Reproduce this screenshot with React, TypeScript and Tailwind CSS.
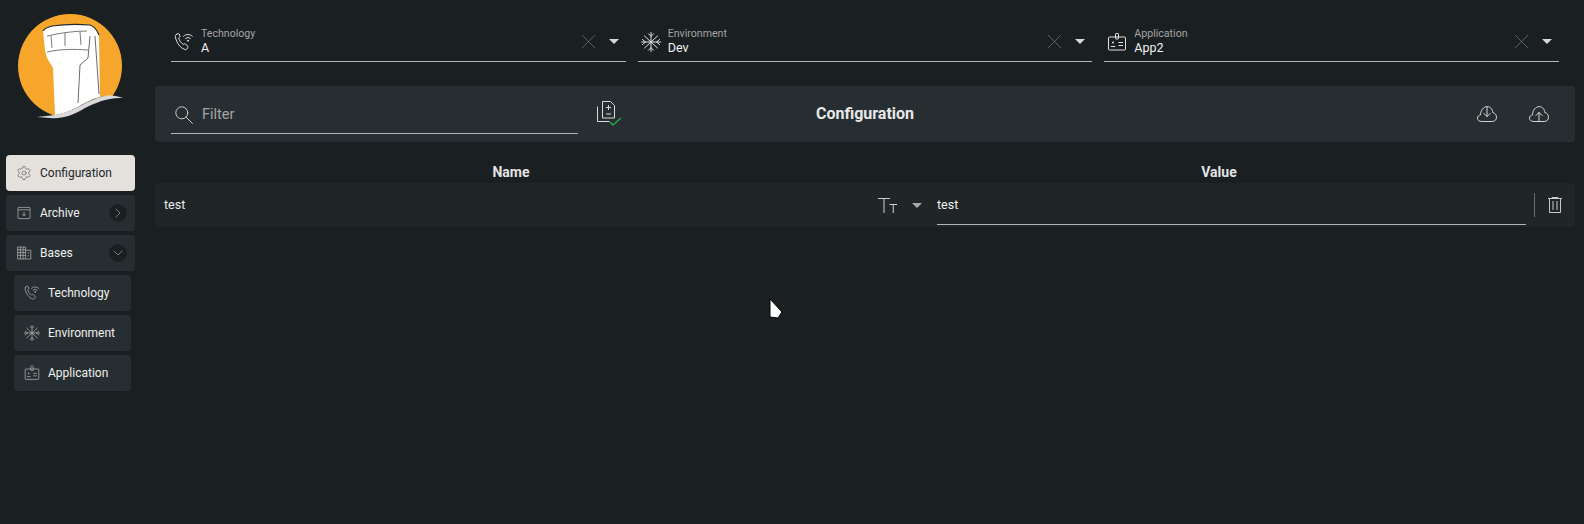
import { ChevronDown, ChevronRight, Settings, X } from "lucide-react";
import type { ReactNode } from "react";

const font = { fontFamily: "Roboto, sans-serif" };

function PhoneWifi({ className }: { className?: string }) {
  return (
    <svg viewBox="0 0 20 20" fill="none" stroke="currentColor" strokeWidth="1" strokeLinecap="round" strokeLinejoin="round" className={className}>
      <path d="M2.200 2.600 4 1.600c.5-.2.9 0 1.100.4l.9 2c.2.4 0 .8-.3 1.100l-1 .8c.6 2.600 2.200 5 4.600 6.500l1.200-.6c.4-.2.8-.1 1.100.2l1.900 2c.4.4.6 1 .3 1.500l-.8 1.400c-.5.8-1.300.9-2.100.6C6.100 15.800 2.600 11.200 1.300 4.600c-.1-.8.3-1.600.9-2Z" />
      <path d="M9.500 4.200c2.800-2.300 6-2.300 8.800 0M11.500 6.500c1.600-1.300 3.200-1.300 4.800 0" />
      <circle cx="13.900" cy="8.700" r=".5" fill="currentColor" />
    </svg>
  );
}

function Flake({ className }: { className?: string }) {
  return (
    <svg viewBox="0 0 20 20" fill="none" stroke="currentColor" strokeWidth="1" strokeLinecap="round" className={className}>
      <path d="M.5 10h19M10 .5v19M3.500 4l13 12M16.500 4l-13 12" />
      <path d="M7.500 1.800 10 4.300l2.500-2.500M7.500 18.200 10 15.700l2.500 2.500M1.500 7.500 4.500 10l-3 2.500M18.500 7.500 15.500 10l3 2.500" />
    </svg>
  );
}

function IdBadge({ className }: { className?: string }) {
  return (
    <svg viewBox="0 0 20 20" fill="none" stroke="currentColor" strokeWidth="1" strokeLinejoin="round" className={className}>
      <rect x="1.500" y="5" width="17" height="13" rx="1" />
      <rect x="8.500" y="1.500" width="3" height="5.500" rx=".6" />
      <circle cx="6" cy="10.500" r="1" fill="currentColor" stroke="none" />
      <path d="M3.800 14.500h4.400M11.500 10.500h4.500M11.500 13.500h4.500" />
    </svg>
  );
}

function Archive({ className }: { className?: string }) {
  return (
    <svg viewBox="0 0 20 20" fill="none" stroke="currentColor" strokeWidth="1" strokeLinejoin="round" className={className}>
      <rect x="2.500" y="3" width="15" height="14" rx="1" />
      <path d="M2.500 6h15M10 8.500v5M7.800 11.500l2.200 2.200 2.200-2.200" />
    </svg>
  );
}

function Building({ className }: { className?: string }) {
  return (
    <svg viewBox="0 0 20 20" fill="none" stroke="currentColor" strokeWidth="1" className={className}>
      <path d="M2 2.500h10v15H2zM12 6.500h6.500v11H12M2 6h10M2 9.500h10M2 13h10M5.500 2.500v15M8.800 2.500v15M14.500 10h2M14.500 13.500h2" />
    </svg>
  );
}

function Magnifier({ className }: { className?: string }) {
  return (
    <svg viewBox="0 0 18 18" fill="none" stroke="currentColor" strokeWidth="1" strokeLinecap="round" className={className}>
      <circle cx="6.800" cy="6.800" r="6" />
      <path d="m11.200 11.200 6.300 6.300" />
    </svg>
  );
}

function DocCheck({ className }: { className?: string }) {
  return (
    <svg viewBox="0 0 25 26" fill="none" stroke="currentColor" strokeWidth="1" strokeLinejoin="round" className={className}>
      <path d="M5.500 .5h8L17.500 4.500V17h-12z" />
      <path d="M.5 5.500v15h12" />
      <path d="M9 6.500h5M11.500 4v5M9 13h5" />
      <path d="m13 21 3 3 8-7" stroke="#22a548" strokeWidth="1.500" />
    </svg>
  );
}

function CloudArrow({ up, className }: { up?: boolean; className?: string }) {
  return (
    <svg viewBox="0 0 20 16" fill="none" stroke="currentColor" strokeWidth="1" strokeLinecap="round" strokeLinejoin="round" className={className}>
      <path d="M4.500 15.500C2.200 15.500.5 14.200.5 12.200c0-1.800 1.300-3.100 3-3.300C3.700 4.200 6.600 .6 10.200.6c3.200 0 5.300 2.500 5.600 6 2.200.3 3.700 2.300 3.700 4.700 0 2.500-1.800 4.200-4 4.200Z" />
      {up ? (
        <path d="M10 15.500V6.500M6.800 9.500 10 6.500l3.200 3" />
      ) : (
        <path d="M10 1v9.500M6.800 7.500l3.200 3 3.200-3" />
      )}
    </svg>
  );
}

function TextSize({ className }: { className?: string }) {
  return (
    <svg viewBox="0 0 19 15" fill="none" stroke="currentColor" strokeWidth="1" className={className}>
      <path d="M0 .5h12M6 .5V15M11.500 6.500H19M15.250 6.500V15" />
    </svg>
  );
}

function Trash({ className }: { className?: string }) {
  return (
    <svg viewBox="0 0 14 16" fill="none" stroke="currentColor" strokeWidth="1" className={className}>
      <path d="M0 1.500h14M1.500 1.500v14h11v-14M5 4v9M9 4v9M4 1.500V.5h6v1" />
    </svg>
  );
}

function Caret({ muted }: { muted?: boolean }) {
  return <span className={`h-0 w-0 border-x-[5px] border-t-[5px] border-x-transparent ${muted ? "border-t-[#a8a8a8]" : "border-t-[#d8d8d8]"}`} />;
}

function Logo() {
  return (
    <svg viewBox="0 0 140 130" className="h-[130px] w-[140px]">
      <path d="M52.600 115A52 52 0 1 1 112.500 96L100 97C85 100 75 112 55 115Z" fill="#f5a62b" />
      <path d="M43 31c2-3 5-4 9-5 13-2 27-2 38-1 3 1 7 5 9 10l1 62c-15 3-25 15-45 18l-2-47-6-10-2-8-2-19Z" fill="#fff" />
      <path d="M43 31c2-3 5-4 9-5 13-2 27-2 38-1 3 1 7 5 9 10" fill="none" stroke="#2a2a2a" strokeWidth="1.200" />
      <path d="M47 36c13-3 27-5 40-5M51 36l1 12M65 33v13M80 32l1 13M47 52c13-3 27-3 41-2" fill="none" stroke="#555" strokeWidth=".8" />
      <path d="M90 36l-2 22-8 7-2 38M95 36l4 58" fill="none" stroke="#444" strokeWidth=".8" />
      <path d="M37 117l18-2C75 112 85 100 105 96c7-1 12 0 18 2-15-1-28 5-38 10-13 8-23 11-35 10Z" fill="#d9d9d9" />
    </svg>
  );
}

function NavItem({ icon, label, active, sub, chevron }: { icon: ReactNode; label: string; active?: boolean; sub?: boolean; chevron?: ReactNode }) {
  return (
    <div className={`flex h-9 items-center rounded-[4px] pl-[10px] ${sub ? "ml-2 mr-[4px]" : ""} ${active ? "bg-[#e4e0dc] text-[#20262a]" : "bg-[#272e31] text-[#f0f0f0]"}`}>
      <span className={`mr-[8px] flex ${active ? "text-[#555a5e]" : "text-[#a9a9a9]"}`}>{icon}</span>
      <span className="flex-1 text-[12px]">{label}</span>
      {chevron && (
        <span className="mr-2 flex h-[18px] w-[18px] items-center justify-center rounded-full bg-[#1a1f22] text-[#aaaaaa]">{chevron}</span>
      )}
    </div>
  );
}

function Select({ icon, label, value }: { icon: ReactNode; label: string; value: string }) {
  return (
    <div className="flex h-10 flex-1 items-center border-b border-[#b5b5b5]">
      <span className="ml-[3px] mr-[7px] flex w-[20px] items-center justify-center text-[#e2e2e2]">{icon}</span>
      <div className="flex-1 pb-px">
        <div className="text-[10.600px] leading-[13px] text-[#a5a5a5]">{label}</div>
        <div className="text-[12.500px] leading-[15px] text-[#f2f2f2]">{value}</div>
      </div>
      <X className="mr-[8px] size-[25px] text-[#6f7376]" strokeWidth={0.7} />
      <span className="mr-[7px] flex"><Caret /></span>
    </div>
  );
}

export default function App() {
  return (
    <div className="flex h-[524px] w-[1584px] overflow-hidden bg-[#1a1f22] text-[#eeeeee]" style={font}>
      <aside className="w-[155px] shrink-0">
        <Logo />
        <nav className="ml-[6px] mt-[25px] flex w-[129px] flex-col gap-1">
          <NavItem active icon={<Settings className="size-4" strokeWidth={1} />} label="Configuration" />
          <NavItem icon={<Archive className="size-4" />} label="Archive" chevron={<ChevronRight className="size-4" strokeWidth={1} />} />
          <NavItem icon={<Building className="size-4" />} label="Bases" chevron={<ChevronDown className="size-4" strokeWidth={1} />} />
          <NavItem sub icon={<PhoneWifi className="size-4" />} label="Technology" />
          <NavItem sub icon={<Flake className="size-4" />} label="Environment" />
          <NavItem sub icon={<IdBadge className="size-4" />} label="Application" />
        </nav>
      </aside>

      <main className="relative w-[1420px] pt-[22px]">
        <div className="flex gap-3 px-4">
          <Select icon={<PhoneWifi className="size-[20px] shrink-0" />} label="Technology" value="A" />
          <Select icon={<Flake className="size-[20px] shrink-0" />} label="Environment" value="Dev" />
          <Select icon={<IdBadge className="size-[20px] shrink-0" />} label="Application" value="App2" />
        </div>

        <div className="mt-6 grid h-14 grid-cols-[1fr_auto_1fr] items-center rounded-[4px] bg-[#272e31] px-4">
          <div className="flex items-center">
            <div className="flex h-10 w-[407px] items-center border-b border-[#b5b5b5] pt-[2px]">
              <Magnifier className="ml-[4px] mr-[9px] size-[18px] text-[#c9c9c9]" />
              <span className="text-[14.500px] text-[#a5a5a5]">Filter</span>
            </div>
            <DocCheck className="ml-[19px] h-[26px] w-[25px] text-[#d9d9d9]" />
          </div>
          <h1 className="text-[16px] font-bold text-[#e8e8e8]">Configuration</h1>
          <div className="flex items-center justify-end gap-8 pr-[10px] text-[#d4d4d4]">
            <CloudArrow className="h-4 w-5" />
            <CloudArrow up className="h-4 w-5" />
          </div>
        </div>

        <div className="flex h-[41px] items-end pb-px text-[14px] font-bold leading-5 text-[#e4e4e4]">
          <div className="w-[712px] text-center">Name</div>
          <div className="w-[704px] text-center">Value</div>
        </div>

        <div className="flex h-11 items-center rounded-[4px] bg-[#202527] pl-[9px] pr-[13px]">
          <span className="flex-1 text-[12.500px] text-[#eeeeee]">test</span>
          <TextSize className="h-[15px] w-[19px] text-[#cfcfcf]" />
          <span className="mx-[15px] flex"><Caret muted /></span>
          <div className="flex h-[42px] w-[589px] items-center self-start border-b border-[#b5b5b5] pt-[3px] text-[12.500px] text-[#f2f2f2]">test</div>
          <span className="ml-2 h-6 w-px bg-[#6c6f71]" />
          <Trash className="ml-[13px] h-4 w-[14px] text-[#c9c9c9]" />
        </div>

        <svg viewBox="0 0 16 24" className="absolute left-[613px] top-[297px] h-6 w-4">
          <path d="M2 2l12 13-4 6-8-1Z" fill="#fff" stroke="#000" strokeWidth="1" />
        </svg>
      </main>
    </div>
  );
}
